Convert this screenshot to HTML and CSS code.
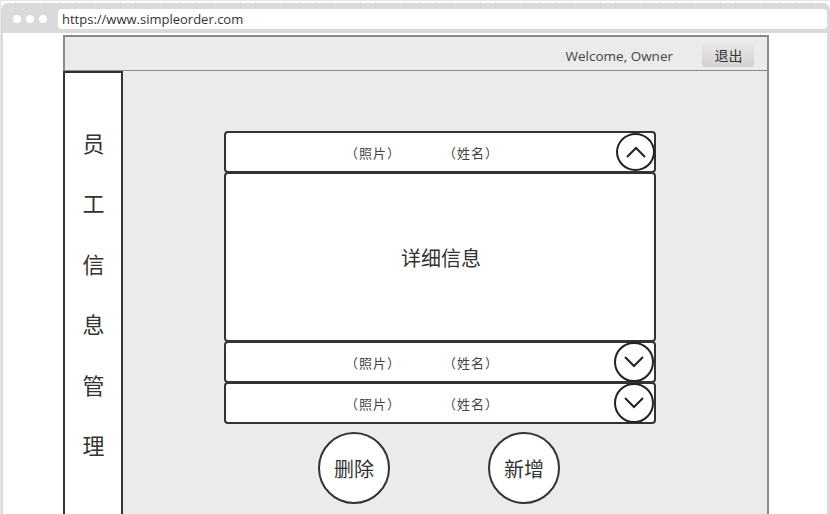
FILE: index.html
```html
<!DOCTYPE html>
<html lang="zh">
<head>
<meta charset="utf-8">
<title>员工信息管理</title>
<link rel="stylesheet" href="styles.css">
</head>
<body>
<div class="browser">
  <div class="topbar">
    <span class="dot"></span><span class="dot"></span><span class="dot"></span>
    <div class="url">https://www.simpleorder.com</div>
  </div>
  <div class="viewport">
    <div class="app">
      <div class="header">
        <span class="welcome">Welcome, Owner</span>
        <button class="logout">退出</button>
      </div>
      <div class="main">
        <div class="sidebar">
          <span>员</span><span>工</span><span>信</span><span>息</span><span>管</span><span>理</span>
        </div>
        <div class="content">
          <div class="list">
            <div class="row first">
              <span class="cell">（照片）</span><span class="cell">（姓名）</span>
              <span class="toggle inset"><svg viewBox="0 0 20 12" width="20" height="12"><path d="M1 11 L10 2 L19 11" fill="none" stroke="#222" stroke-width="2"/></svg></span>
            </div>
            <div class="detail">详细信息</div>
            <div class="row">
              <span class="cell">（照片）</span><span class="cell">（姓名）</span>
              <span class="toggle"><svg viewBox="0 0 20 12" width="20" height="12"><path d="M1 1 L10 10 L19 1" fill="none" stroke="#222" stroke-width="2"/></svg></span>
            </div>
            <div class="row">
              <span class="cell">（照片）</span><span class="cell">（姓名）</span>
              <span class="toggle"><svg viewBox="0 0 20 12" width="20" height="12"><path d="M1 1 L10 10 L19 1" fill="none" stroke="#222" stroke-width="2"/></svg></span>
            </div>
          </div>
          <div class="actions">
            <button class="round">删除</button>
            <button class="round">新增</button>
          </div>
        </div>
      </div>
    </div>
  </div>
</div>
</body>
</html>
```

FILE: styles.css
```css
html, body {
  margin: 0;
  padding: 0;
}
body {
  width: 830px;
  height: 514px;
  overflow: hidden;
  background-color: #fff;
  background-image:
    linear-gradient(to right, #e6e6e6 1px, transparent 1px),
    linear-gradient(to bottom, #e6e6e6 1px, transparent 1px);
  background-size: 15px 15px;
  font-family: "Noto Sans CJK SC", "Open Sans", sans-serif;
  color: #333;
}
.browser {
  margin: 3px 0 0 1px;
  width: 829px;
  height: 511px;
  box-sizing: border-box;
  background: #dadada;
  border-radius: 7px 7px 0 0;
  padding: 0 3px 0 2px;
  display: flex;
  flex-direction: column;
}
.topbar {
  height: 30px;
  display: flex;
  align-items: flex-start;
  padding-top: 6px;
  box-sizing: border-box;
}
.dot {
  width: 8px;
  height: 8px;
  border-radius: 50%;
  background: #fff;
  margin-top: 6px;
  margin-left: 5px;
}
.dot:first-child {
  margin-left: 10px;
}
.url {
  flex: 1;
  margin-left: 11px;
  height: 20px;
  background: #fff;
  border-radius: 4px;
  font-family: "Open Sans", sans-serif;
  font-size: 13px;
  line-height: 20px;
  padding-left: 4px;
  color: #333;
}
.viewport {
  flex: 1;
  background: #fff;
  padding: 2px 0 0 60px;
  overflow: hidden;
}
.app {
  width: 706px;
  height: 100%;
  display: flex;
  flex-direction: column;
}
.header {
  height: 36px;
  box-sizing: border-box;
  border: 2px solid #8a8a8a;
  border-bottom: 1px solid #8a8a8a;
  background: #ebebeb;
  display: flex;
  align-items: center;
  justify-content: flex-end;
  padding-right: 13px;
}
.welcome {
  font-family: "Open Sans", sans-serif;
  font-size: 13.5px;
  color: #444;
  margin-right: 29px;
  margin-top: 4px;
}
.logout {
  width: 52px;
  height: 24px;
  border: none;
  border-radius: 3px;
  background: linear-gradient(#e8e8e8, #d2d2d2);
  font-family: "Noto Sans CJK SC", sans-serif;
  font-size: 14px;
  color: #333;
  padding: 0 0 0 1px;
  margin-top: 2px;
}
.main {
  flex: 1;
  display: flex;
  border-right: 2px solid #8a8a8a;
  min-height: 0;
}
.sidebar {
  width: 60px;
  box-sizing: border-box;
  border: 2px solid #333;
  border-bottom: none;
  background: #fff;
  display: flex;
  flex-direction: column;
  align-items: center;
  padding-top: 39px;
  font-size: 22px;
  color: #333;
}
.sidebar span {
  line-height: 60.4px;
  height: 60.4px;
  padding-left: 1px;
}
.content {
  flex: 1;
  background: #ebebeb;
  padding: 60px 0 0 101px;
}
.list {
  width: 432px;
}
.row, .detail {
  box-sizing: border-box;
  background: #fff;
  border: 2px solid #333;
  border-radius: 4px;
  position: relative;
}
.row {
  height: 42px;
  display: flex;
  align-items: center;
  padding-left: 119px;
  font-size: 13px;
  color: #444;
}
.row + .row, .detail + .row {
  margin-top: -1px;
}
.cell {
  width: 56px;
  letter-spacing: 1px;
}
.cell + .cell {
  margin-left: 42px;
}
.detail {
  height: 170px;
  margin-top: -1px;
  display: flex;
  align-items: center;
  justify-content: center;
  font-size: 20px;
  color: #333;
  padding-left: 2px;
}
.toggle {
  position: absolute;
  right: 0;
  top: -1px;
  width: 40px;
  height: 40px;
  box-sizing: border-box;
  border: 2px solid #222;
  border-radius: 50%;
  background: #fff;
  display: flex;
  align-items: center;
  justify-content: center;
}
.toggle.inset {
  right: -1px;
  top: 0;
  width: 39px;
  height: 38px;
}
.toggle svg {
  display: block;
}
.actions {
  display: flex;
  justify-content: center;
  gap: 98px;
  margin-top: 8px;
  width: 432px;
  box-sizing: border-box;
  padding-right: 2px;
}
.round {
  width: 72px;
  height: 72px;
  border-radius: 50%;
  border: 2px solid #333;
  background: #fff;
  font-family: "Noto Sans CJK SC", sans-serif;
  font-size: 20px;
  color: #333;
  padding: 0;
}
```
